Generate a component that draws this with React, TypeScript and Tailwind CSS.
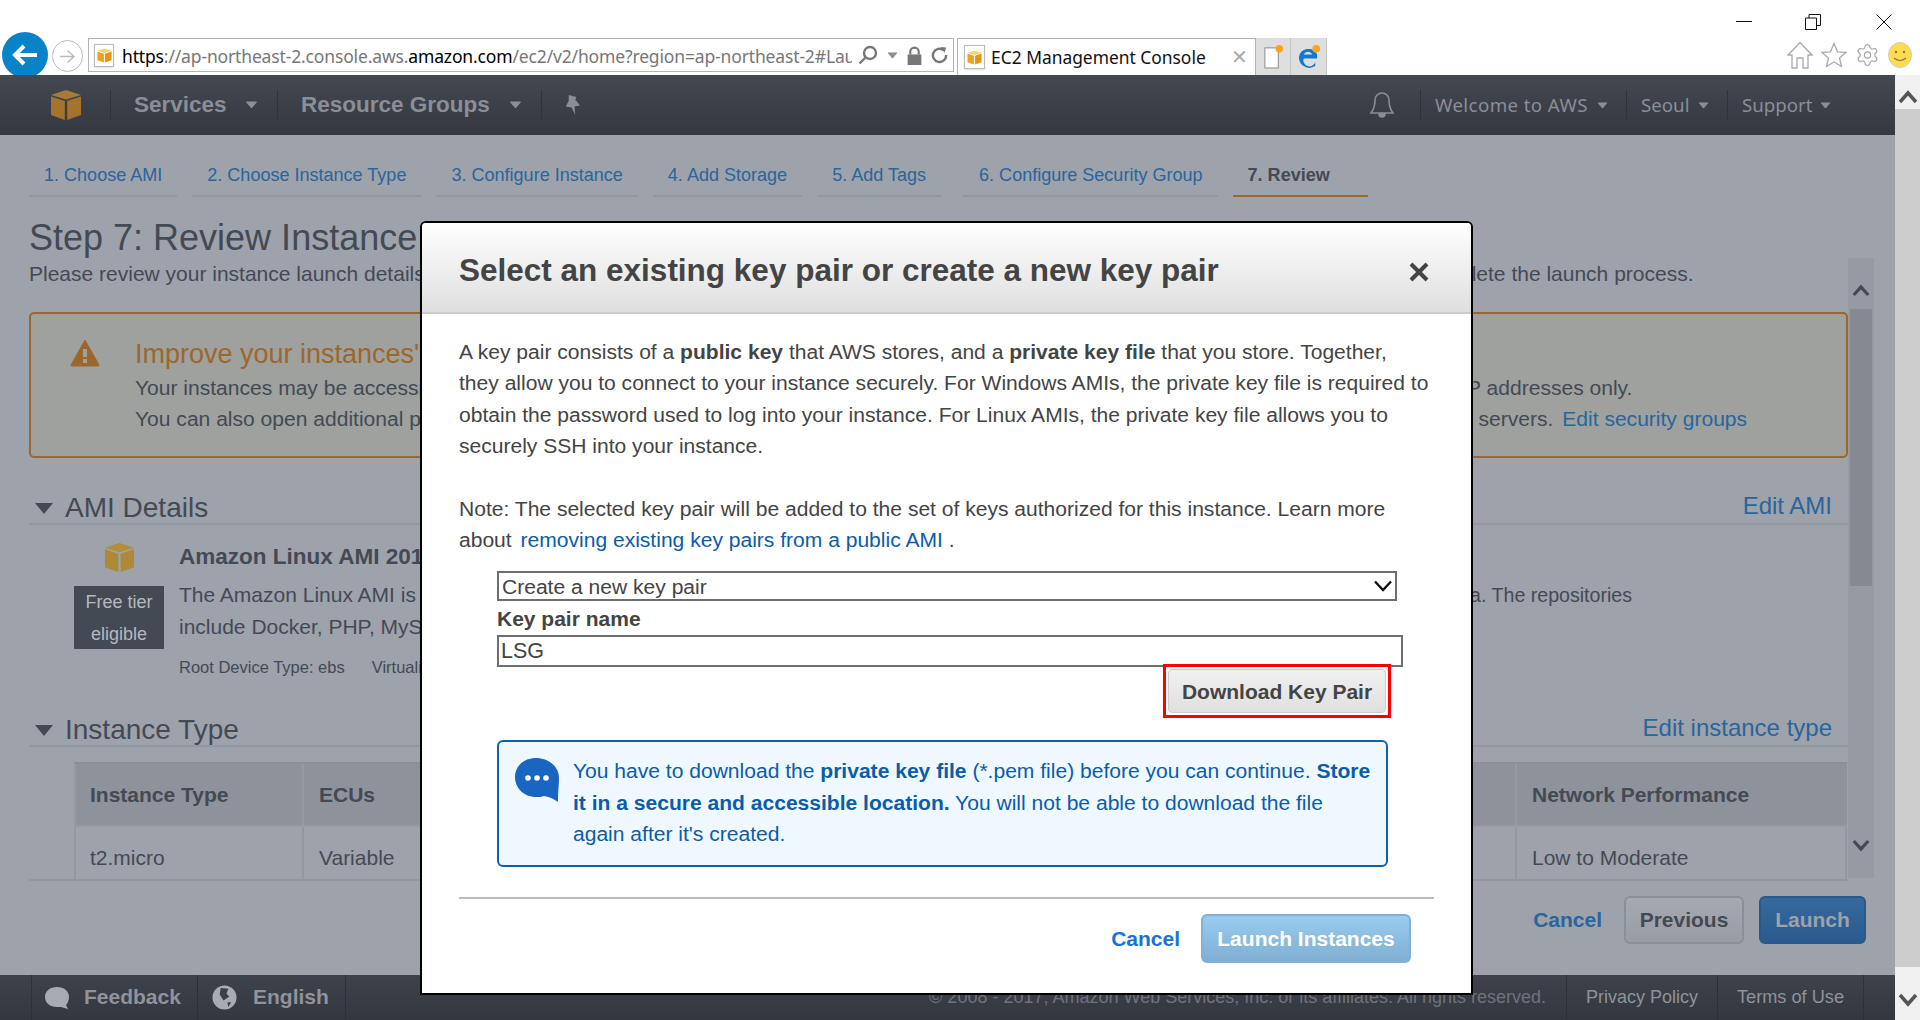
import React from 'react';
import { Settings } from 'lucide-react';

const tabs = ['1. Choose AMI', '2. Choose Instance Type', '3. Configure Instance', '4. Add Storage', '5. Add Tags'];

// AWS cube logo, also used for the favicons
const Cube = ({ className, top, left, right }: { className: string; top: string; left: string; right: string }) => (
  <svg viewBox="0 0 32 32" className={className}>
    <path d="M16 1 L31 6 L16 10.5 L1 6 Z" fill={top} />
    <path d="M1 7.5 L14.8 12 L14.8 31 L1 26 Z" fill={left} />
    <path d="M31 7.5 L17.2 12 L17.2 31 L31 26 Z" fill={right} />
  </svg>
);

const Favicon = ({ className }: { className: string }) => (
  <div className={`relative border border-[#bbb] bg-white flex items-center justify-center shadow-sm ${className}`}>
    <Cube className="w-[15px] h-[15px]" top="#ffcf70" left="#f0a31e" right="#e8940f" />
  </div>
);

const Caret = ({ className }: { className: string }) => (
  <svg viewBox="0 0 12 8" className={className}>
    <path d="M1 1 H11 L6 7 Z" fill="#8a8e96" stroke="#8a8e96" strokeLinejoin="round" />
  </svg>
);

const Chevron = ({ up, className }: { up: boolean; className: string }) => (
  <svg viewBox="0 0 20 14" className={className}>
    <path d={up ? 'M2 12 L10 3 L18 12' : 'M2 2 L10 11 L18 2'} fill="none" stroke="currentColor" strokeWidth="3.5" />
  </svg>
);

const BrowserBar = () => (
  <div className="h-[75px] bg-white flex flex-col font-['Noto_Sans',sans-serif]">
    <div className="h-[38px] flex items-start justify-end">
      <svg viewBox="0 0 16 16" className="w-[16px] h-[16px] mt-[14px] mr-[53px]"><path d="M0 7.5 H16" stroke="#111" strokeWidth="1" /></svg>
      <svg viewBox="0 0 16 16" className="w-[16px] h-[16px] mt-[14px] mr-[55px]" fill="none" stroke="#111" strokeWidth="1"><path d="M0.5 4 H11.5 V15.5 H0.5 Z M4 4 V0.5 H15.5 V11.5 H11.5" /></svg>
      <svg viewBox="0 0 16 16" className="w-[16px] h-[16px] mt-[14px] mr-[28px]" stroke="#111" strokeWidth="1"><path d="M0.5 0.5 L15.5 15.5 M15.5 0.5 L0.5 15.5" /></svg>
    </div>
    <div className="h-[37px] flex items-end relative">
      <div className="absolute left-[2px] bottom-0 w-[46px] h-[43px] overflow-hidden">
        <div className="w-[46px] h-[46px] rounded-full bg-[#0883c8] flex items-center justify-center">
          <svg viewBox="0 0 26 24" className="w-[26px] h-[24px]"><path d="M12 3 L3 12 L12 21 M3 12 H25" fill="none" stroke="#fff" strokeWidth="4" /></svg>
        </div>
      </div>
      <div className="absolute left-[52px] top-[2px] w-[31px] h-[32px] rounded-full border border-[#bbb] flex items-center justify-center">
        <svg viewBox="0 0 18 16" className="w-[17px] h-[15px]"><path d="M9 1.5 L16 8 L9 14.5 M16 8 H1" fill="none" stroke="#bbb" strokeWidth="1.5" /></svg>
      </div>
      <div className="ml-[88px] w-[866px] h-[34px] mb-[3px] border border-[#b4b4b4] flex items-center pl-[5px]">
        <Favicon className="w-[20px] h-[23px] shrink-0" />
        <span className="ml-[8px] mt-[2px] w-[730px] overflow-hidden whitespace-nowrap text-[17.5px] tracking-[-0.15px] text-[#777]">
          <span className="text-black">https</span>://ap-northeast-2.console.aws.<span className="text-black">amazon.com</span>/ec2/v2/home?region=ap-northeast-2#LaunchInstanceWizard:
        </span>
        <svg viewBox="0 0 20 20" className="w-[20px] h-[20px] ml-[6px]" fill="none" stroke="#777" strokeWidth="2.4"><circle cx="12" cy="8" r="6" /><path d="M8 12 L1.5 18.5" /></svg>
        <Caret className="w-[11px] h-[7px] ml-[9px]" />
        <svg viewBox="0 0 14 18" className="w-[15px] h-[19px] ml-[9px]"><path d="M3 8 V5.5 a4 4 0 0 1 8 0 V8" fill="none" stroke="#777" strokeWidth="2" /><rect x="0.5" y="8" width="13" height="10" fill="#777" /></svg>
        <svg viewBox="0 0 18 18" className="w-[17px] h-[18px] ml-[9px]" fill="none" stroke="#777" strokeWidth="2.6"><path d="M13.5 4 A7 7 0 1 0 16 9" /><path d="M10 0.5 L16 1 L14.5 6.5 Z" fill="#777" stroke="none" /></svg>
      </div>
      <div className="ml-[3px] w-[299px] h-[37px] border border-b-0 border-[#b4b4b4] flex items-center pl-[6px]">
        <Favicon className="w-[21px] h-[24px] shrink-0" />
        <span className="ml-[6px] mt-[1px] text-[17.4px] text-[#111] whitespace-nowrap">EC2 Management Console</span>
        <span className="ml-auto mr-[7px] text-[20px] leading-none text-[#aaa]">✕</span>
      </div>
      <div className="w-[35px] h-[37px] bg-[#dedede] border-r border-[#c4c4c4] flex items-center justify-center">
        <svg viewBox="0 0 22 26" className="w-[21px] h-[25px]"><rect x="2" y="4" width="14" height="21" fill="#fff" stroke="#888" /><circle cx="17" cy="5" r="4" fill="#f7a520" /></svg>
      </div>
      <div className="w-[36px] h-[37px] bg-[#dedede] border-r border-[#c4c4c4] flex items-center justify-center">
        <svg viewBox="0 0 26 26" className="w-[25px] h-[25px]">
          <path d="M3 14 A10 10 0 0 1 22 11 V15 H8 A6 6 0 0 0 20 19 V23 A11 11 0 0 1 3 14 Z M8 11 H17 A5 5 0 0 0 8 11 Z" fill="#0f78d4" fillRule="evenodd" />
          <circle cx="21" cy="5" r="4" fill="#f7a520" />
        </svg>
      </div>
      <div className="ml-auto flex items-center gap-[8px] pr-[8px] pb-[6px]">
        <svg viewBox="0 0 26 28" className="w-[26px] h-[28px]" fill="none" stroke="#aaa" strokeWidth="1.3"><path d="M1 14 L13 1.5 L25 14 H21 V27 H16 V17 H10 V27 H5 V14 Z" /></svg>
        <svg viewBox="0 0 26 26" className="w-[26px] h-[26px]" fill="none" stroke="#aaa" strokeWidth="1.3"><path d="M13 1.5 L16.5 9.8 L25 10.4 L18.5 16 L20.5 24.5 L13 20 L5.5 24.5 L7.5 16 L1 10.4 L9.5 9.8 Z" /></svg>
        <Settings className="w-[25px] h-[26px] text-[#aaa]" strokeWidth={1.2} />
        <svg viewBox="0 0 24 26" className="w-[24px] h-[26px]"><ellipse cx="12" cy="13" rx="11.5" ry="12.5" fill="#ffdb4d" stroke="#ccc" /><circle cx="8" cy="10" r="1.2" fill="#775" /><circle cx="16" cy="10" r="1.2" fill="#775" /><path d="M6 16 Q12 21 18 16" fill="none" stroke="#775" strokeWidth="1.2" /></svg>
      </div>
    </div>
  </div>
);

const Nav = () => (
  <div className="h-[60px] bg-gradient-to-b from-[#434851] to-[#343840] flex items-center font-['Liberation_Sans',sans-serif] text-[#8a8e96]">
    <Cube className="w-[32px] h-[32px] ml-[50px]" top="#a87a35" left="#a4742c" right="#a4742c" />
    <div className="w-px h-[30px] bg-[#2f333a] ml-[28px]" />
    <span className="ml-[23px] w-[92px] text-[22.5px] font-bold whitespace-nowrap">Services</span>
    <Caret className="w-[13px] h-[8px] ml-[19px]" />
    <div className="w-px h-[30px] bg-[#2f333a] ml-[19px]" />
    <span className="ml-[23px] w-[189px] text-[22.5px] font-bold whitespace-nowrap">Resource Groups</span>
    <Caret className="w-[13px] h-[8px] ml-[19px]" />
    <div className="w-px h-[30px] bg-[#2f333a] ml-[19px]" />
    <svg viewBox="0 0 20 24" className="w-[19px] h-[23px] ml-[21px]"><path d="M6 1 L14 3 L13 6 L18 12 L12 13 L13 22 L9 14 L3 13 L6 7 Z" fill="#8a8e96" /></svg>
    <svg viewBox="0 0 24 28" className="w-[24px] h-[28px] ml-[788px]" fill="none" stroke="#8a8e96" strokeWidth="1.6"><path d="M12 2 a7 7 0 0 1 7 7 c0 6 1 9 4 13 H1 c3 -4 4 -7 4 -13 a7 7 0 0 1 7 -7 Z" /><path d="M9 23 a3 3 0 0 0 6 0 Z" fill="#8a8e96" /></svg>
    <div className="w-px h-[30px] bg-[#2f333a] ml-[26px]" />
    <div className="flex items-center font-['Noto_Sans',sans-serif] text-[18.7px] whitespace-nowrap">
      <span className="ml-[14px] mt-[1px] w-[154px] tracking-[0.4px]">Welcome to AWS</span>
      <Caret className="w-[11px] h-[7px] ml-[8px]" />
      <div className="w-px h-[30px] bg-[#2f333a] ml-[18px]" />
      <span className="ml-[14px] mt-[1px] w-[49px]">Seoul</span>
      <Caret className="w-[11px] h-[7px] ml-[8px]" />
      <div className="w-px h-[30px] bg-[#2f333a] ml-[18px]" />
      <span className="ml-[14px] mt-[1px] w-[71px]">Support</span>
      <Caret className="w-[11px] h-[7px] ml-[7px]" />
    </div>
  </div>
);

const SectionHead = ({ title, edit }: { title: string; edit: string }) => (
  <div className="h-[39px] flex items-end justify-between border-b-2 border-[#93979f] pr-[16px]">
    <div className="flex items-center -mb-[3px]">
      <svg viewBox="0 0 18 11" className="w-[18px] h-[11px] ml-[6px]"><path d="M0 0 H18 L9 11 Z" fill="#444a54" /></svg>
      <span className="ml-[12px] text-[28px] leading-[36px] text-[#444a54]">{title}</span>
    </div>
    <span className="text-[24px] leading-[36px] text-[#2a659b] -mb-[1px]">{edit}</span>
  </div>
);

const Background = () => (
  <div className="h-[840px] bg-[#9ea2ab] pl-[29px] text-[#444a54] font-['Liberation_Sans',sans-serif]">
    <div className="h-[62px] flex items-end gap-[15px]">
      {tabs.map((t) => (
        <div key={t} className="h-[35px] px-[15px] border-b-2 border-[#93979f] text-[18.05px] text-[#2a659b] whitespace-nowrap">{t}</div>
      ))}
      <div className="h-[35px] pl-[16px] pr-[15px] ml-[7px] border-b-2 border-[#93979f] text-[18.05px] text-[#2a659b] whitespace-nowrap">6. Configure Security Group</div>
      <div className="h-[35px] w-[135px] pl-[15px] border-b-2 border-[#9c672d] text-[18.05px] font-bold whitespace-nowrap">7. Review</div>
    </div>
    <div className="h-[46px] mt-[18px] text-[36px] leading-[46px]">Step 7: Review Instance Launch</div>
    <div className="h-[28px] -mt-px text-[21px] leading-[28px] whitespace-nowrap">Please review your instance launch details. You can go back to edit changes for each section. Click Launch to assign a key pair to your instance and <span className="ml-[8px]">complete the launch process.</span></div>

    <div className="h-[567px] mt-[24px] w-[1819px] overflow-hidden border-b-2 border-[#93979f] box-content">
      <div className="h-[146px] border-2 border-[#9c672d] rounded-[5px] bg-[#9ea19e] flex">
        <svg viewBox="0 0 30 28" className="w-[30px] h-[28px] ml-[39px] mt-[25px] shrink-0">
          <path d="M15 1 L29 26 a1 1 0 0 1 -1 1 H2 a1 1 0 0 1 -1 -1 Z" fill="#9c672d" stroke="#9c672d" strokeLinejoin="round" />
          <rect x="13" y="10" width="4" height="8" fill="#9ea19e" />
          <rect x="13" y="20" width="4" height="4" fill="#9ea19e" />
        </svg>
        <div className="ml-[35px] whitespace-nowrap">
          <div className="text-[27px] leading-[36px] mt-[22px] text-[#9c672d]">Improve your instances' security. Your security group, launch-wizard-1, is open to the world.</div>
          <div className="text-[21.05px] leading-[31px]">Your instances may be accessible from any IP address. We recommend that you update your security group rules to allow access from known IP addresses only.</div>
          <div className="text-[21.05px] leading-[31px]">You can also open additional ports in your security group to facilitate access to the application or service you're running, e.g., HTTP (80) for web servers. <span className="text-[#2a659b] ml-[3px]">Edit security groups</span></div>
        </div>
      </div>

      <div className="mt-[28px]"><SectionHead title="AMI Details" edit="Edit AMI" /></div>
      <div className="h-[183px] flex">
        <div className="w-[90px] ml-[45px] flex flex-col items-center pt-[17px]">
          <Cube className="w-[31px] h-[31px]" top="#b58d38" left="#ad8a35" right="#ad8a35" />
          <div className="mt-[13px] h-[63px] w-[90px] bg-[#444a54] text-[#b5b8be] text-[18px] leading-[32px] text-center">Free tier<br />eligible</div>
        </div>
        <div className="ml-[15px] pt-[15px] whitespace-nowrap">
          <div className="text-[22.5px] leading-[34px] font-bold">Amazon Linux AMI 2017.03.1 (HVM), SSD Volume Type - ami-983ce8f6</div>
          <div className="text-[21px] leading-[31px] mt-[5px]">The Amazon Linux AMI is <span className="text-[20.5px] tracking-[-0.55px]">an EBS-backed, AWS-supported image. The default image includes AWS command line tools, Python, Ruby, Perl, and Jav</span><span className="text-[19.6px]">a. The repositories</span></div>
          <div className="text-[21px] leading-[31px]">include Docker, PHP, MySQL, PostgreSQL, and other packages.</div>
          <div className="text-[16.5px] leading-[26px] mt-[12px]">Root Device Type: ebs<span className="ml-[27px]">Virtualization type: hvm</span></div>
        </div>
      </div>

      <SectionHead title="Instance Type" edit="Edit instance type" />
      <div className="ml-[45px] mt-[15px] w-[1773px] border-t-2 border-[#8b8f98]">
        <div className="h-[63px] flex items-center bg-[#8e929b] font-bold text-[21px] border-b-2 border-[#969aa3]">
          <div className="w-[230px] h-full flex items-center pl-[14px] border-l-2 border-r-2 border-[#969aa3]">Instance Type</div>
          <div className="pl-[15px] flex-1">ECUs</div>
          <div className="w-[332px] h-full flex items-center pl-[15px] border-l-2 border-[#969aa3]">Network Performance</div>
        </div>
        <div className="h-[62px] flex items-center text-[21px]">
          <div className="w-[230px] h-full flex items-center pl-[14px] border-l-2 border-r-2 border-[#93979f]">t2.micro</div>
          <div className="pl-[15px] flex-1">Variable</div>
          <div className="w-[332px] h-full flex items-center pl-[15px] border-l-2 border-r-2 border-[#93979f]">Low to Moderate</div>
        </div>
      </div>
    </div>

    <div className="flex items-center justify-end h-[48px] mt-[15px] pr-[29px]">
      <span className="text-[21px] font-bold text-[#2a659b]">Cancel</span>
      <div className="ml-[22px] w-[120px] h-[48px] rounded-[6px] border-2 border-[#8b8f98] bg-gradient-to-b from-[#a6a9b1] to-[#989ca4] flex items-center justify-center text-[21px] font-bold">Previous</div>
      <div className="ml-[15px] w-[107px] h-[48px] rounded-[6px] border-2 border-[#27598c] bg-gradient-to-b from-[#36699c] to-[#2a5a8e] flex items-center justify-center text-[21px] font-bold text-[#9ea2ab]">Launch</div>
    </div>
  </div>
);

const Footer = () => (
  <div className="h-[45px] bg-gradient-to-b from-[#3e424b] to-[#33373f] flex items-center text-[#8f939a] font-['Liberation_Sans',sans-serif]">
    <div className="ml-[31px] w-[167px] h-full border-l border-r border-[#2d3036] flex items-center">
      <svg viewBox="0 0 26 24" className="w-[26px] h-[24px] ml-[12px]"><path d="M13 1 C20 1 25 5 25 11 C25 15 23 18 22 19 L24 23 L17 21 C15 21 14 21 13 21 C6 21 1 17 1 11 C1 5 6 1 13 1 Z" fill="#a7acb3" /></svg>
      <span className="ml-[14px] -mt-px text-[21px] font-bold">Feedback</span>
    </div>
    <div className="w-[148px] h-full border-r border-[#2d3036] flex items-center">
      <svg viewBox="0 0 26 26" className="w-[25px] h-[25px] ml-[14px]"><circle cx="13" cy="13" r="12.5" fill="#a7acb3" /><path d="M9 3 L17 4 L15 9 L18 12 L12 16 L8 10 Z M16 18 L20 18 L17 23 Z" fill="#3b3f47" /></svg>
      <span className="ml-[16px] -mt-px text-[21px] font-bold">English</span>
    </div>
    <div className="ml-auto w-[1220px] text-right pr-[20px] text-[18px] text-[#6f737b] whitespace-nowrap">© 2008 - 2017, Amazon Web Services, Inc. or its affiliates. All rights reserved.</div>
    <div className="w-[152px] h-full border-l border-r border-[#2d3036] flex items-center justify-center text-[18px]">Privacy Policy</div>
    <div className="w-[146px] h-full border-r border-[#2d3036] flex items-center justify-center text-[18.2px]">Terms of Use</div>
    <div className="w-[31px]" />
  </div>
);

const KeyPairModal = () => (
  <div className="absolute left-[420px] top-[146px] w-[1053px] h-[774px] bg-white border-2 border-black rounded-t-[6px] font-['Liberation_Sans',sans-serif] text-[#444]">
    <div className="h-[91px] rounded-t-[4px] bg-gradient-to-b from-white to-[#dfdfdf] border-b-2 border-[#ccc] flex items-center justify-between pt-[6px] pl-[37px] pr-[42px]">
      <h2 className="text-[31.5px] font-bold">Select an existing key pair or create a new key pair</h2>
      <svg viewBox="0 0 20 20" className="w-[20px] h-[20px] mt-[3px]"><path d="M2 2 L18 18 M18 2 L2 18" stroke="#444" strokeWidth="4" /></svg>
    </div>
    <div className="pl-[37px] pr-[36px] pt-[22px] text-[21.05px] leading-[31.4px]">
      <p>A key pair consists of a <b>public key</b> that AWS stores, and a <b>private key file</b> that you store. Together,<br />they allow you to connect to your instance securely. For Windows AMIs, the private key file is required to<br />obtain the password used to log into your instance. For Linux AMIs, the private key file allows you to<br />securely SSH into your instance.</p>
      <p className="mt-[31px]">Note: The selected key pair will be added to the set of keys authorized for this instance. Learn more<br />about <span className="text-[#0b5cab] ml-[3px]">removing existing key pairs from a public AMI</span> .</p>
      <div className="ml-[38px] mt-[16px]">
        <div className="w-[900px] h-[30px] border-2 border-[#6e6e6e] flex items-center justify-between pl-[3px] pr-[3px] leading-none">
          <span>Create a new key pair</span>
          <svg viewBox="0 0 18 12" className="w-[18px] h-[12px]"><path d="M1 1.5 L9 10 L17 1.5" fill="none" stroke="#111" strokeWidth="2.4" /></svg>
        </div>
        <div className="mt-[2px] text-[21px] leading-[32px] font-bold">Key pair name</div>
        <div className="w-[906px] h-[32px] border-2 border-[#6e6e6e] flex items-center pl-[2px] text-[21.5px] leading-none">LSG</div>
        <div className="w-[894px] flex justify-end -mt-[3px] relative">
          <div className="w-[228px] h-[54px] border-[3px] border-[#ff0000] p-[2px] bg-white">
            <div className="h-full rounded-[4px] border border-[#ccc] bg-gradient-to-b from-[#f0f0f0] to-[#e0e0e0] flex items-center justify-center text-[21px] font-bold">Download Key Pair</div>
          </div>
        </div>
        <div className="w-[891px] h-[127px] mt-[22px] border-2 border-[#0a63b0] rounded-[6px] bg-[#f0f8ff] flex text-[#0b5cab]">
          <svg viewBox="0 0 46 46" className="w-[46px] h-[46px] ml-[15px] mt-[15px] shrink-0">
            <path d="M22 1 C34 1 45 9 45 21 C45 28 44 34 44 45 C40 42 36 40 30 39 C28 40 25 40 22 40 C10 40 1 31 1 20 C1 9 10 1 22 1 Z" fill="#1966c2" />
            <circle cx="14" cy="21" r="2.8" fill="#fff" /><circle cx="23" cy="21" r="2.8" fill="#fff" /><circle cx="32" cy="21" r="2.8" fill="#fff" />
          </svg>
          <p className="ml-[13px] mt-[13px] whitespace-nowrap">You have to download the <b>private key file</b> (*.pem file) before you can continue. <b>Store</b><br /><b>it in a secure and accessible location.</b> You will not be able to download the file<br />again after it's created.</p>
        </div>
      </div>
      <div className="mt-[30px] border-t-2 border-[#bbb] w-[975px]" />
      <div className="flex justify-end items-center w-[952px] mt-[15px]">
        <span className="text-[21px] font-bold text-[#1a73d4]">Cancel</span>
        <div className="ml-[21px] w-[210px] h-[49px] rounded-[6px] border-2 border-[#7fb1d8] bg-gradient-to-b from-[#9accef] to-[#7fafd2] flex items-center justify-center text-[21px] font-bold text-white">Launch Instances</div>
      </div>
    </div>
  </div>
);

const App: React.FC = () => {
  return (
    <div className="w-[1920px] h-[1020px] overflow-hidden bg-white flex flex-col">
      <BrowserBar />
      <div className="flex h-[945px]">
        <div className="w-[1895px] relative">
          <Nav />
          <Background />
          <Footer />
          {/* inner scroll bar of the wizard */}
          <div className="absolute left-[1848px] top-[183px] w-[26px] h-[620px] bg-[#969aa3] flex flex-col items-center text-[#444a54]">
            <Chevron up className="w-[18px] h-[13px] mt-[26px]" />
            <div className="w-[22px] h-[277px] mt-[12px] bg-[#858a92]" />
            <div className="flex-1" />
            <Chevron up={false} className="w-[18px] h-[13px] mb-[26px]" />
          </div>
          <KeyPairModal />
        </div>
        {/* browser scroll bar */}
        <div className="w-[25px] bg-[#cdcdcd] flex flex-col">
          <div className="h-[34px] bg-[#f0f0f0] flex justify-center text-[#555] pt-[15px]">
            <Chevron up className="w-[20px] h-[14px]" />
          </div>
          <div className="flex-1" />
          <div className="h-[53px] bg-[#f0f0f0] flex justify-center items-end text-[#555] pb-[13px]">
            <Chevron up={false} className="w-[20px] h-[14px]" />
          </div>
        </div>
      </div>
    </div>
  );
};

export default App;
